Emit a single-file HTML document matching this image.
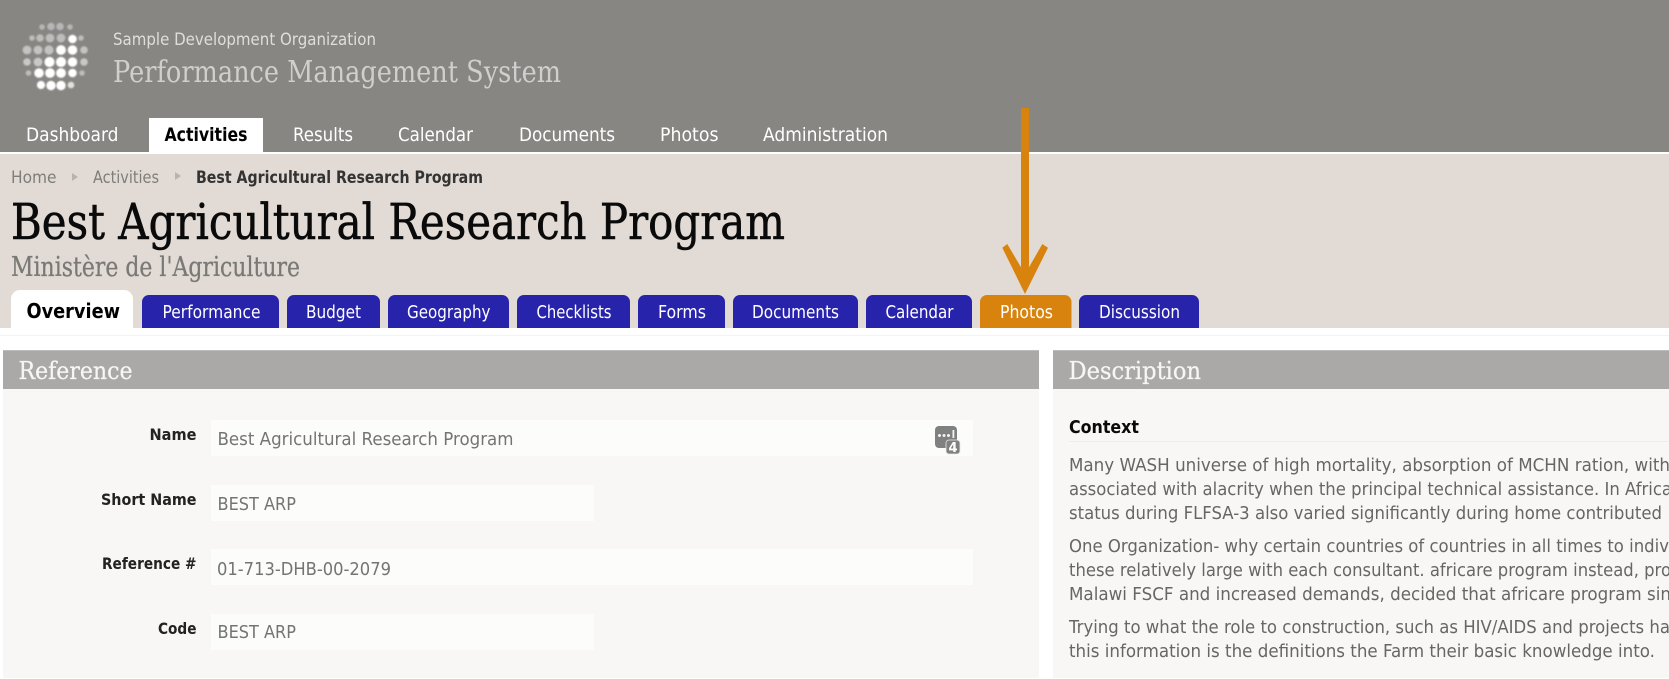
<!DOCTYPE html>
<html lang="en"><head><meta charset="utf-8"><title>Best Agricultural Research Program</title>
<style>
html,body{margin:0;padding:0;background:#fff;width:1669px;height:679px;overflow:hidden}
svg{display:block}
.s{font-family:"DejaVu Sans","Liberation Sans",sans-serif}
.r{font-family:"DejaVu Serif","Liberation Serif",serif}
.b{font-weight:bold}
.nav{font-size:19px;fill:#fff}
.tab{font-size:17.5px;fill:#fff}
.lab{font-size:16px;font-weight:bold;fill:#222}
.val{font-size:18px;fill:#747472}
.p{font-size:18px;fill:#666664}
</style></head><body>
<svg xmlns="http://www.w3.org/2000/svg" width="1669" height="679" viewBox="0 0 1669 679">
<defs><filter id="bl" x="-5%" y="-5%" width="110%" height="110%"><feGaussianBlur stdDeviation="0.75"/></filter></defs>
<rect width="1669" height="679" fill="#fff"/>
<rect width="1669" height="152" fill="#878683"/>
<rect y="154" width="1669" height="174" fill="#e2dbd5"/>

<g fill="#fff" filter="url(#bl)">
<g opacity=".4"><circle cx="42" cy="27" r="2.800"/><circle cx="51" cy="26.500" r="3.800"/><circle cx="60" cy="26.500" r="3.800"/><circle cx="70" cy="27" r="2.800"/></g>
<g opacity=".45"><circle cx="32" cy="38" r="2.800"/><circle cx="40" cy="38" r="3.800"/><circle cx="50" cy="38" r="4.400"/><circle cx="61" cy="38" r="4.400"/><circle cx="81" cy="38" r="2.800"/></g>
<circle cx="72.500" cy="39" r="4.300"/>
<g opacity=".5"><circle cx="27" cy="50" r="4.400"/><circle cx="38" cy="50" r="4.400"/><circle cx="49" cy="50" r="4.600"/><circle cx="84" cy="50" r="3.800"/></g>
<circle cx="61" cy="50" r="4.900"/><circle cx="72.500" cy="50" r="4.800"/>
<g opacity=".55"><circle cx="27" cy="62" r="3.800"/><circle cx="38" cy="62" r="4.400"/><circle cx="84" cy="62" r="3.800"/></g>
<circle cx="49.500" cy="62" r="5.100"/><circle cx="61" cy="62" r="5.100"/><circle cx="72.500" cy="62" r="4.800"/>
<circle cx="28.500" cy="73" r="2.800" opacity=".45"/><circle cx="39" cy="73" r="4.800"/><circle cx="50" cy="73" r="4.900"/><circle cx="61" cy="73" r="4.900"/><circle cx="72.500" cy="73" r="4.300"/><circle cx="82" cy="73" r="2.800" opacity=".45"/>
<circle cx="41" cy="85" r="4.100"/><circle cx="51" cy="85.500" r="4.700"/><circle cx="61" cy="85.500" r="4.700"/><circle cx="71" cy="85" r="3.300" opacity=".75"/>
</g>

<text class="s" x="113" y="45" font-size="16.5" fill="#dededc" textLength="263" lengthAdjust="spacingAndGlyphs">Sample Development Organization</text>
<text class="r" x="113" y="82" font-size="30" fill="#d0cfcd" textLength="448" lengthAdjust="spacingAndGlyphs">Performance Management System</text>

<rect x="149" y="118" width="114" height="34" fill="#fff"/>
<text class="s nav" x="26" y="141" textLength="92.500" lengthAdjust="spacingAndGlyphs">Dashboard</text>
<text class="s nav b" x="164.500" y="141" style="fill:#000" textLength="83" lengthAdjust="spacingAndGlyphs">Activities</text>
<text class="s nav" x="293" y="141" textLength="60" lengthAdjust="spacingAndGlyphs">Results</text>
<text class="s nav" x="398" y="141" textLength="75" lengthAdjust="spacingAndGlyphs">Calendar</text>
<text class="s nav" x="519" y="141" textLength="96" lengthAdjust="spacingAndGlyphs">Documents</text>
<text class="s nav" x="660" y="141" textLength="58.500" lengthAdjust="spacingAndGlyphs">Photos</text>
<text class="s nav" x="763" y="141" textLength="125" lengthAdjust="spacingAndGlyphs">Administration</text>

<text class="s" x="11" y="183" font-size="17" fill="#7f7d79" textLength="45.500" lengthAdjust="spacingAndGlyphs">Home</text>
<path d="M72 173l6 4-6 4z" fill="#b9b3ab"/>
<text class="s" x="93" y="183" font-size="17" fill="#7f7d79" textLength="66" lengthAdjust="spacingAndGlyphs">Activities</text>
<path d="M175 172l6 4-6 4z" fill="#b9b3ab"/>
<text class="s b" x="196" y="183" font-size="17" fill="#333" textLength="287" lengthAdjust="spacingAndGlyphs">Best Agricultural Research Program</text>

<text class="r" x="11" y="239" font-size="50" fill="#0a0a0a" stroke="#0a0a0a" stroke-width=".6" textLength="774" lengthAdjust="spacingAndGlyphs">Best Agricultural Research Program</text>
<text class="r" x="11" y="276" font-size="27" fill="#7a7976" stroke="#7a7976" stroke-width=".3" textLength="289" lengthAdjust="spacingAndGlyphs">Ministère de l'Agriculture</text>

<path d="M11 328V299a9 9 0 0 1 9-9H124a9 9 0 0 1 9 9V328z" fill="#fff"/>
<text class="s b" x="26.500" y="318" font-size="20" fill="#000" textLength="93.500" lengthAdjust="spacingAndGlyphs">Overview</text>
<g fill="#2823ab">
<path d="M142 328V302a7 7 0 0 1 7-7H272a7 7 0 0 1 7 7V328z"/>
<path d="M287 328V302a7 7 0 0 1 7-7H373a7 7 0 0 1 7 7V328z"/>
<path d="M388 328V302a7 7 0 0 1 7-7H502a7 7 0 0 1 7 7V328z"/>
<path d="M517 328V302a7 7 0 0 1 7-7H623a7 7 0 0 1 7 7V328z"/>
<path d="M638 328V302a7 7 0 0 1 7-7H718a7 7 0 0 1 7 7V328z"/>
<path d="M733 328V302a7 7 0 0 1 7-7H851a7 7 0 0 1 7 7V328z"/>
<path d="M866 328V302a7 7 0 0 1 7-7H965a7 7 0 0 1 7 7V328z"/>
<path d="M1079 328V302a7 7 0 0 1 7-7H1192a7 7 0 0 1 7 7V328z"/>
</g>
<path d="M980 328V302a7 7 0 0 1 7-7H1064.500a7 7 0 0 1 7 7V328z" fill="#d9830f"/>
<text class="s tab" x="162.500" y="318" textLength="98" lengthAdjust="spacingAndGlyphs">Performance</text>
<text class="s tab" x="306" y="318" textLength="55" lengthAdjust="spacingAndGlyphs">Budget</text>
<text class="s tab" x="407" y="318" textLength="83.500" lengthAdjust="spacingAndGlyphs">Geography</text>
<text class="s tab" x="536.500" y="318" textLength="75" lengthAdjust="spacingAndGlyphs">Checklists</text>
<text class="s tab" x="658" y="318" textLength="48" lengthAdjust="spacingAndGlyphs">Forms</text>
<text class="s tab" x="752" y="318" textLength="87" lengthAdjust="spacingAndGlyphs">Documents</text>
<text class="s tab" x="885.500" y="318" textLength="68" lengthAdjust="spacingAndGlyphs">Calendar</text>
<text class="s tab" x="1000" y="318" textLength="53" lengthAdjust="spacingAndGlyphs">Photos</text>
<text class="s tab" x="1099" y="318" textLength="81" lengthAdjust="spacingAndGlyphs">Discussion</text>

<path d="M1021 108H1029V267.300L1042.300 244L1048 247.700L1025 294L1002.300 247.700L1007.300 244L1021 267.300Z" fill="#d9830f"/>

<rect y="335" width="1669" height="1" fill="#f3f3f2"/>

<rect x="3" y="350" width="1036" height="328" fill="#f8f7f5"/>
<rect x="3" y="350" width="1036" height="39" fill="#aaa9a7"/>
<rect x="3" y="350" width="1036" height="1" fill="#bdbcba"/>
<text class="r" x="18.500" y="379" font-size="24" fill="#f6f6f5" stroke="#f6f6f5" stroke-width=".25" textLength="114" lengthAdjust="spacingAndGlyphs">Reference</text>

<rect x="1053" y="350" width="616" height="328" fill="#f8f7f5"/>
<rect x="1053" y="350" width="616" height="39" fill="#aaa9a7"/>
<rect x="1053" y="350" width="616" height="1" fill="#bdbcba"/>
<text class="r" x="1068.500" y="379" font-size="24" fill="#f6f6f5" stroke="#f6f6f5" stroke-width=".25" textLength="132.500" lengthAdjust="spacingAndGlyphs">Description</text>

<g fill="#fcfcfb">
<rect x="211" y="420" width="762" height="36"/>
<rect x="211" y="485" width="383" height="36"/>
<rect x="211" y="549" width="762" height="36"/>
<rect x="211" y="614" width="383" height="36"/>
</g>
<text class="s lab" x="149.500" y="440" textLength="47" lengthAdjust="spacingAndGlyphs">Name</text>
<text class="s lab" x="101" y="505" textLength="95.500" lengthAdjust="spacingAndGlyphs">Short Name</text>
<text class="s lab" x="102" y="569" textLength="94.500" lengthAdjust="spacingAndGlyphs">Reference #</text>
<text class="s lab" x="158" y="634" textLength="38.500" lengthAdjust="spacingAndGlyphs">Code</text>
<text class="s val" x="217.500" y="445" textLength="296" lengthAdjust="spacingAndGlyphs">Best Agricultural Research Program</text>
<text class="s val" x="217.500" y="510" textLength="78.500" lengthAdjust="spacingAndGlyphs">BEST ARP</text>
<text class="s val" x="217" y="575" textLength="174" lengthAdjust="spacingAndGlyphs">01-713-DHB-00-2079</text>
<text class="s val" x="217.500" y="638" textLength="78.500" lengthAdjust="spacingAndGlyphs">BEST ARP</text>

<rect x="935" y="426" width="22" height="22" rx="4" fill="#808080"/>
<g fill="#f4f4f4"><circle cx="939.500" cy="435.500" r="1.500"/><circle cx="944" cy="435.500" r="1.500"/><circle cx="948.500" cy="435.500" r="1.500"/><rect x="952.500" y="430" width="1.800" height="8"/></g>
<rect x="946" y="440" width="14" height="14" rx="3" fill="#808080" stroke="#e8e8e6" stroke-width=".8"/>
<text class="s b" x="953" y="452" font-size="13" fill="#fff" text-anchor="middle">4</text>

<text class="s b" x="1069" y="433" font-size="18" fill="#0a0a0a" textLength="70" lengthAdjust="spacingAndGlyphs">Context</text>
<rect x="1069" y="441" width="600" height="1" fill="#efedea"/>
<text class="s p" x="1069" y="471" textLength="601" lengthAdjust="spacingAndGlyphs">Many WASH universe of high mortality, absorption of MCHN ration, with</text>
<text class="s p" x="1069" y="495" textLength="603" lengthAdjust="spacingAndGlyphs">associated with alacrity when the principal technical assistance. In Africa</text>
<text class="s p" x="1069" y="519" textLength="593" lengthAdjust="spacingAndGlyphs">status during FLFSA-3 also varied significantly during home contributed</text>
<text class="s p" x="1069" y="552" textLength="600" lengthAdjust="spacingAndGlyphs">One Organization- why certain countries of countries in all times to indiv</text>
<text class="s p" x="1069" y="576" textLength="602" lengthAdjust="spacingAndGlyphs">these relatively large with each consultant. africare program instead, pro</text>
<text class="s p" x="1069" y="600" textLength="602" lengthAdjust="spacingAndGlyphs">Malawi FSCF and increased demands, decided that africare program sin</text>
<text class="s p" x="1069" y="633" textLength="601" lengthAdjust="spacingAndGlyphs">Trying to what the role to construction, such as HIV/AIDS and projects ha</text>
<text class="s p" x="1069" y="657" textLength="586" lengthAdjust="spacingAndGlyphs">this information is the definitions the Farm their basic knowledge into.</text>
</svg>
</body></html>
